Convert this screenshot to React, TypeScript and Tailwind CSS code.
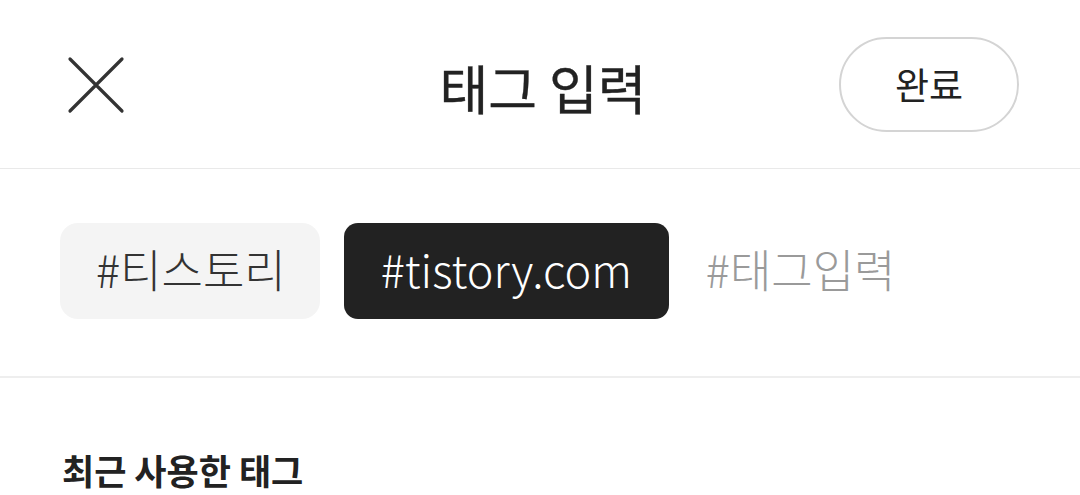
import React from 'react';

const font = { fontFamily: '"Noto Sans CJK KR", "Noto Sans", sans-serif' };

const CloseIcon = () => (
  <svg width="58" height="58" viewBox="0 0 58 58" fill="none">
    <path d="M3 3 L55 55 M55 3 L3 55" stroke="#333333" strokeWidth="3.2" strokeLinecap="round" />
  </svg>
);

const App = () => {
  const tags = ['#티스토리'];

  return (
    <div className="w-[1080px] h-[495px] bg-white overflow-hidden text-[#222222]" style={font}>
      {/* header */}
      <header className="h-[169px] grid grid-cols-[1fr_auto_1fr] items-center pl-[67px] pr-[61px] border-b border-[#e9e9e9]">
        <button className="justify-self-start pt-[2px]">
          <CloseIcon />
        </button>
        <h1 className="text-[53px] font-normal leading-none pt-[6px] [-webkit-text-stroke:0.35px_#222222]">태그 입력</h1>
        <button className="justify-self-end w-[180px] h-[95px] rounded-full border-2 border-[#d4d4d4] text-[37px] leading-none pt-[1px]">
          완료
        </button>
      </header>

      {/* tag input */}
      <div className="flex items-center gap-[24px] px-[60px] pt-[54px] pb-[57px] border-b-2 border-[#eeeeee]">
        {tags.map((t) => (
          <span key={t} className="shrink-0 whitespace-nowrap h-[96px] flex items-center pl-[36px] pr-[34px] pb-[5px] rounded-[18px] bg-[#f4f4f4] text-[45px] font-light text-[#333333]">
            {t}
          </span>
        ))}
        <span className="shrink-0 whitespace-nowrap h-[96px] flex items-center px-[37px] pb-[5px] rounded-[14px] bg-[#222222] text-[45px] font-light text-white">
          #tistory.com
        </span>
        <input
          className="ml-[13px] min-w-0 flex-1 text-[45px] font-light outline-none placeholder:text-[#9a9a9a] bg-transparent pb-[5px]"
          placeholder="#태그입력"
          style={font}
        />
      </div>

      {/* recent */}
      <section className="px-[62px] pt-[66px]">
        <h2 className="text-[35px] font-bold leading-[1.5] text-[#222222]">최근 사용한 태그</h2>
      </section>
    </div>
  );
};

export default App;
